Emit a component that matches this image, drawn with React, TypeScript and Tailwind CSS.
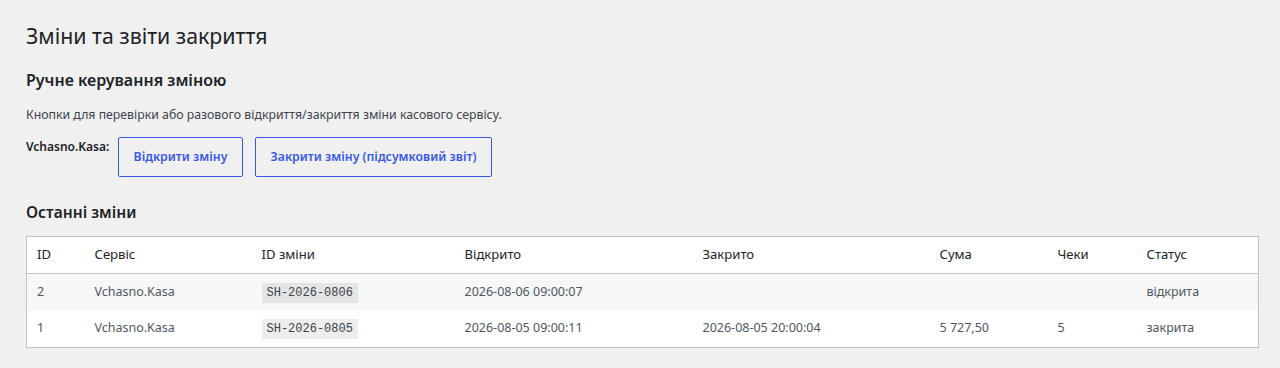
const rows = [
  { id: "2", service: "Vchasno.Kasa", shift: "SH-2026-0806", opened: "2026-08-06 09:00:07", closed: "", sum: "", checks: "", status: "відкрита" },
  { id: "1", service: "Vchasno.Kasa", shift: "SH-2026-0805", opened: "2026-08-05 09:00:11", closed: "2026-08-05 20:00:04", sum: "5 727,50", checks: "5", status: "закрита" },
]

export default function App() {
  return (
    <div className="min-h-[368px] bg-[#f0f0f1] pl-[26px] pr-[21px] pt-[21px] pb-4 text-[12.5px] text-[#3c434a] font-['Noto_Sans','Open_Sans',sans-serif]">
      <h1 className="text-[21.3px] leading-[30px] font-normal text-[#1d2327]">Зміни та звіти закриття</h1>

      <h2 className="mt-[18px] text-[16px] leading-[22px] font-semibold text-[#1d2327]">Ручне керування зміною</h2>
      <p className="mt-[15px] text-[12.3px] leading-[18px]">Кнопки для перевірки або разового відкриття/закриття зміни касового сервісу.</p>

      <div className="mt-[13px] flex items-start">
        <span className="mt-[1px] w-[92px] text-[12px] font-semibold text-[#1d2327] leading-[18px]">Vchasno.Kasa:</span>
        <button className="h-10 w-[125px] border border-[#3858e9] rounded-[2px] text-[12.3px] text-[#3858e9] font-semibold bg-transparent">
          Відкрити зміну
        </button>
        <button className="ml-3 h-10 w-[237px] border border-[#3858e9] rounded-[2px] text-[12.3px] text-[#3858e9] font-semibold bg-transparent">
          Закрити зміну (підсумковий звіт)
        </button>
      </div>

      <h2 className="mt-6 text-[15.6px] leading-[22px] font-semibold text-[#1d2327]">Останні зміни</h2>

      <table className="mt-[13px] w-full table-fixed border border-[#c3c4c7] bg-white text-left">
        <thead>
          <tr className="border-b border-[#c3c4c7] text-[13.1px] text-[#1d2327]">
            <th className="w-[58px] h-[37px] px-[10px] font-normal">ID</th>
            <th className="w-[167px] px-[10px] font-normal">Сервіс</th>
            <th className="w-[203px] px-[10px] font-normal">ID зміни</th>
            <th className="w-[238px] px-[10px] font-normal">Відкрито</th>
            <th className="w-[237px] px-[10px] font-normal">Закрито</th>
            <th className="w-[118px] px-[10px] font-normal">Сума</th>
            <th className="w-[89px] px-[10px] font-normal">Чеки</th>
            <th className="px-[10px] font-normal">Статус</th>
          </tr>
        </thead>
        <tbody className="text-[#50575e]">
          {rows.map((r, i) => (
            <tr key={r.id} className={i % 2 === 0 ? "bg-[#f6f7f7]" : "bg-white"}>
              <td className="h-[37px] px-[10px]">{r.id}</td>
              <td className="px-[10px]">{r.service}</td>
              <td className="px-[10px]">
                <code className="bg-black/[0.07] px-[5px] py-[3px] text-[12px] font-['Liberation_Mono',monospace] text-[#3c434a]">
                  {r.shift}
                </code>
              </td>
              <td className="px-[10px]">{r.opened}</td>
              <td className="px-[10px]">{r.closed}</td>
              <td className="px-[10px]">{r.sum}</td>
              <td className="px-[10px]">{r.checks}</td>
              <td className="px-[10px]">{r.status}</td>
            </tr>
          ))}
        </tbody>
      </table>
    </div>
  )
}
